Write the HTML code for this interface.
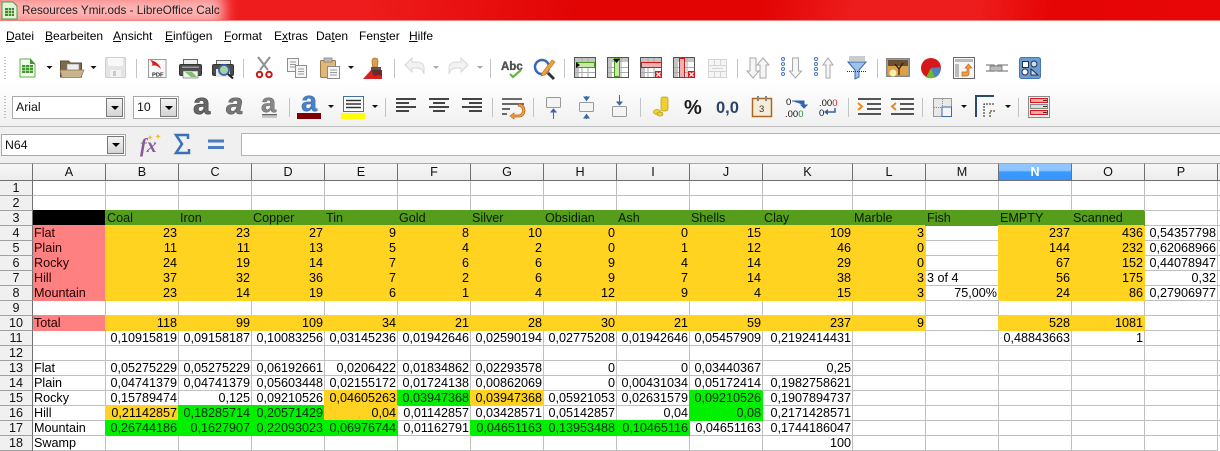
<!DOCTYPE html>
<html><head><meta charset="utf-8"><title>Resources Ymir.ods - LibreOffice Calc</title>
<style>
html,body{margin:0;padding:0;background:#fff}
body{width:1220px;height:449px;overflow:hidden;position:relative;font-family:"Liberation Sans",Arial,sans-serif;color:#000}
#title{position:absolute;left:0;top:0;width:1220px;height:20px;background:linear-gradient(100deg,#ee1c1c 0,#ee1c1c 30%,#e20303 48%,#e20303 62%,#ee1d1d 70%,#ee1d1d 80%,#e60505 86%,#e80606 100%);overflow:hidden}
#glow{position:absolute;left:-8px;top:-6px;width:232px;height:32px;background:rgba(255,195,195,.9);filter:blur(7px)}
#ttext{position:absolute;left:22px;top:4px;font-size:11.7px;line-height:14px;color:#222;white-space:nowrap}
#tline{position:absolute;left:0;top:20px;width:1220px;height:2px;background:linear-gradient(#f08080 50%,#fff 50%)}
#chrome{position:absolute;left:0;top:22px;width:1220px;height:141px;background:linear-gradient(#fff 0,#fff 60px,#f0f0f0 104px,#f0f0f0 141px)}
.m{position:absolute;top:29px;font-size:12px;line-height:15px;color:#000;white-space:nowrap}
.m u{text-underline-offset:1px}
#svg{position:absolute;left:0;top:0;width:1220px;height:163px}
table{position:absolute;left:0;top:163px;border-collapse:separate;border-spacing:0;table-layout:fixed;width:1218px;font-size:12.6px}
td,th{box-sizing:border-box;height:15px;padding:0 1px 0 1px;line-height:14px;border-right:1px solid #c0c0c0;border-bottom:1px solid #c0c0c0;text-align:right;white-space:nowrap;overflow:visible;font-weight:normal;background:#fff;color:#000}
tr.h th{height:18px;border-top:1px solid #a8a8a8;border-right:1px solid #707070;border-bottom:1px solid #707070;text-align:center;background:linear-gradient(#f7f7f7,#ececec);color:#111;line-height:16px;padding:0}
tr.h th.n{background:linear-gradient(#8fc6ff 0,#8fc6ff 40%,#3a99ff 50%,#3496ff 100%);color:#fff;font-weight:bold;border-right-color:#707070}
td.rh{border-right:1px solid #707070;border-bottom:1px solid #a0a0a0;background:#f0f0f0;text-align:center;padding:0;color:#111}
.t{text-align:left}
.y{background:#ffd320;border-color:#ffd320;box-shadow:-1px -1px 0 0 #ffd320}
.g{background:#579d1c;border-color:#579d1c;box-shadow:-1px -1px 0 0 #579d1c;text-align:left;color:#0a1a00}
.l{background:#00f000;border-color:#00f000;box-shadow:-1px -1px 0 0 #00f000;color:#022802}
.r{background:#ff8080;border-color:#ff8080;box-shadow:0 -1px 0 0 #ff8080;text-align:left;color:#200}
.k{background:#000;border-color:#000;box-shadow:0 -1px 0 0 #000}
.box{position:absolute;box-sizing:border-box;background:#fff;border:1px solid #a9a9a9;font-size:12.3px;line-height:20px;padding-left:3px;color:#111}
.btn{position:absolute;box-sizing:border-box;border:1px solid #777;background:linear-gradient(#f4f4f4,#d4d4d4)}
.btn:after{content:"";position:absolute;left:50%;top:50%;margin:-2px 0 0 -4px;border:4px solid transparent;border-top:4px solid #000;border-bottom:0}
#qh{position:absolute;left:1218px;top:163px;width:2px;height:18px;box-sizing:border-box;border-top:1px solid #a8a8a8;border-bottom:1px solid #707070;background:#f0f0f0}
#q{position:absolute;left:1218px;top:181px;width:2px;height:268px;background:repeating-linear-gradient(#fff 0,#fff 14px,#c0c0c0 14px,#c0c0c0 15px)}
</style></head><body>
<div id="title"><div id="glow"></div><div id="ttext">Resources Ymir.ods - LibreOffice Calc</div></div>
<div id="tline"></div>
<div id="chrome"></div>
<div class="m" style="left:6px"><u>D</u>atei</div>
<div class="m" style="left:45px"><u>B</u>earbeiten</div>
<div class="m" style="left:113px"><u>A</u>nsicht</div>
<div class="m" style="left:165px"><u>E</u>infügen</div>
<div class="m" style="left:224px"><u>F</u>ormat</div>
<div class="m" style="left:274px">E<u>x</u>tras</div>
<div class="m" style="left:316px">Da<u>t</u>en</div>
<div class="m" style="left:359px">Fen<u>s</u>ter</div>
<div class="m" style="left:409px"><u>H</u>ilfe</div>

<svg id="svg" viewBox="0 0 1220 163" xmlns="http://www.w3.org/2000/svg" font-family="Liberation Sans, Arial, sans-serif">
<!-- window app icon -->
<path d="M2 2h11l4 4v13H2z" fill="#e4f2dc" stroke="#4d9a3a"/><rect x="5" y="8" width="9" height="8" fill="#3c8a2a"/><path d="M5 10.500h9M5 13.500h9M8.500 8v8M11.500 8v8" stroke="#cfe8c4" stroke-width=".8"/>
<!-- bar lines -->
<rect x="0" y="126" width="1220" height="1" fill="#bdbdbd"/>
<rect x="241.500" y="133.500" width="979" height="22" fill="#fff" stroke="#b4b4b4"/>
<!-- grips -->
<path d="M5 57v22M5 96v23" stroke="#888" stroke-dasharray="1 2" fill="none"/>
<!-- separators -->
<g stroke="#c4c4c4"><path d="M136.500 59v19M243.500 59v19M394.500 59v19M490.500 59v19M564.500 59v19M737.500 59v19M877.500 59v19"/>
<path d="M289.500 98v19M385.500 98v19M492.500 98v19M533.500 98v19M640.500 98v19M848.500 98v19M922.500 98v19M1018.500 98v19"/></g>
<!-- dropdown arrows -->
<g fill="#111"><path d="M46.500 66h6l-3 3zM90.500 66h6l-3 3zM348 66h6l-3 3zM328 105h6l-3 3zM372 105h6l-3 3zM961 105h6l-3 3zM1005 105h6l-3 3z"/></g>
<g fill="#aaa"><path d="M433 66h6l-3 3zM477 66h6l-3 3z"/></g>
<!-- new doc -->
<path d="M20 59h10l5 5v13H20z" fill="#f4faf0" stroke="#62b04c"/><path d="M30 58v6h5z" fill="#3d9a2a"/><rect x="22" y="65" width="11" height="8" fill="#42982a"/><path d="M22 67.500h11M22 70.500h11M25.500 65v8M29.500 65v8" stroke="#c8e6bc" stroke-width=".8"/>
<!-- open -->
<path d="M60.500 61h8l2 2h11v14h-21z" fill="#7d6a4a" stroke="#5d4e36"/><rect x="67" y="64" width="12" height="8" fill="#eee" stroke="#888" stroke-width=".6"/><path d="M60 70h24l-3 7.500H62z" fill="#c8b48c" stroke="#8a7755" stroke-width=".7"/>
<!-- save disabled -->
<rect x="105.500" y="57.500" width="20" height="20" rx="1" fill="#e4e4e4" stroke="#cfcfcf"/><rect x="108" y="58" width="15" height="8" fill="#f8f8f8"/><rect x="110" y="70" width="11" height="7" fill="#f3f3f3"/><rect x="113" y="71" width="3" height="5" fill="#c9c9c9"/>
<!-- pdf -->
<path d="M148.500 59.500h17.500v18h-17.500z" fill="#fafafa" stroke="#9a9a9a"/><path d="M150 60c6 1 10 5 11 9-4-4-7-4-10-3 2-1 2-3-1-6z" fill="#d82020"/><text x="152" y="76.500" font-size="5.800" font-weight="bold" fill="#222">PDF</text>
<!-- print -->
<rect x="183.500" y="59.500" width="14" height="6" fill="#eee" stroke="#666"/><rect x="179.500" y="64.500" width="22" height="11" rx="1.500" fill="#4c4c4c" stroke="#333"/><rect x="183" y="71" width="15" height="7" fill="#f0f0f0" stroke="#666" stroke-width=".6"/><path d="M185 72l6 5h6l-5-5z" fill="#7cc070"/><rect x="182" y="66.500" width="17" height="1.500" fill="#999"/>
<!-- preview -->
<rect x="216.500" y="60.500" width="14" height="5" fill="#eee" stroke="#666"/><rect x="212.500" y="64.500" width="21" height="11" rx="1.500" fill="#4c4c4c" stroke="#333"/><rect x="216" y="69" width="14" height="8" fill="#e8e8e8"/><circle cx="224" cy="70" r="5" fill="#a8cfa8" stroke="#3668a8" stroke-width="1.800"/><path d="M228 74l5 4.500" stroke="#222" stroke-width="2"/>
<!-- cut -->
<path d="M260 70L270 57M268 70L258 57" stroke="#8f8f8f" stroke-width="2" fill="none"/><circle cx="259.500" cy="74.500" r="2.700" fill="#fff" stroke="#c81818" stroke-width="2"/><circle cx="269" cy="74.500" r="2.700" fill="#fff" stroke="#c81818" stroke-width="2"/>
<!-- copy -->
<rect x="287.500" y="58.500" width="11" height="13" fill="#f5f5f5" stroke="#909090"/><path d="M290 62h6M290 64.500h6M290 67h6" stroke="#999"/><rect x="295.500" y="65.500" width="11" height="12" fill="#f5f5f5" stroke="#909090"/><path d="M298 69h6M298 71.500h6M298 74h6" stroke="#999"/>
<!-- paste -->
<rect x="320.500" y="60.500" width="15" height="17" rx="1" fill="#e0b878" stroke="#9a7a4a"/><rect x="324" y="58" width="8" height="4" fill="#bbb" stroke="#777" stroke-width=".7"/><rect x="327.500" y="66.500" width="12" height="12" fill="#f7f7f7" stroke="#8a8a8a"/><path d="M330 70h7M330 72.500h7M330 75h7" stroke="#999"/>
<!-- brush -->
<path d="M375 58c2 0 3 1 3 3l-.5 6h-5l-.5-6c0-2 1-3 3-3z" fill="#d8a050" stroke="#a87428" stroke-width=".7"/><rect x="371" y="67" width="10" height="3" fill="#555"/><path d="M371 70h11v6h-11z" fill="#6a2a2a"/><path d="M363 79l8-9 3 6 5-1 3 1v3z" fill="#d82020"/>
<!-- undo/redo disabled -->
<path d="M405 65l7-7v4h5c5 0 7 3 7 6v6c-1-4-3-6-7-6h-5v4z" fill="#f2f2f2" stroke="#d8d8d8"/>
<path d="M468 65l-7-7v4h-5c-5 0-7 3-7 6v6c1-4 3-6 7-6h5v4z" fill="#f2f2f2" stroke="#d8d8d8"/>
<!-- abc -->
<text x="501" y="70" font-size="11.500" font-weight="bold" fill="#555" stroke="#333" stroke-width=".3">Abc</text><path d="M510 74l3 3 8-7" stroke="#66b83c" stroke-width="2.200" fill="none"/>
<!-- find -->
<circle cx="542" cy="67" r="7" fill="#fff" stroke="#3a68b8" stroke-width="2.500"/><path d="M548 73l6 6" stroke="#333" stroke-width="3"/><path d="M542 73l10-13 3 2-10 13-4 1z" fill="#f0a040" stroke="#b06818" stroke-width=".6"/>
<!-- table icons -->
<g fill="#fff" stroke="#555"><rect x="574.500" y="57.500" width="21" height="20"/><rect x="607.500" y="57.500" width="21" height="20"/><rect x="640.500" y="57.500" width="21" height="20"/><rect x="673.500" y="57.500" width="21" height="20"/></g>
<g fill="#c4c4c4"><rect x="575" y="58" width="20" height="4"/><rect x="575" y="58" width="4" height="19"/><rect x="608" y="58" width="20" height="4"/><rect x="608" y="58" width="4" height="19"/><rect x="641" y="58" width="20" height="4"/><rect x="641" y="58" width="4" height="19"/><rect x="674" y="58" width="20" height="4"/><rect x="674" y="58" width="4" height="19"/></g>
<g stroke="#aaa" fill="none"><path d="M575 67.500h20M575 72.500h20M582 58v19M588 58v19M608 67.500h20M608 72.500h20M615 58v19M621 58v19M641 67.500h20M641 72.500h20M648 58v19M654 58v19M674 67.500h20M674 72.500h20M681 58v19M687 58v19"/></g>
<rect x="576.500" y="62.500" width="18" height="5" fill="#c8e8a8" stroke="#4c9a1c"/><path d="M576 62l4 3-4 3z" fill="#111"/>
<rect x="614.500" y="58.500" width="5" height="18" fill="#c8e8a8" stroke="#4c9a1c"/><path d="M613 59h7l-3.500 4z" fill="#111"/>
<rect x="641.500" y="62.500" width="20" height="5" fill="#f0b0b0" stroke="#d01818"/><rect x="655" y="71" width="7" height="7" fill="#d81818"/><path d="M656.500 72.500l4 4m0-4l-4 4" stroke="#fff" stroke-width="1.300"/>
<rect x="679.500" y="58.500" width="5" height="19" fill="#f0b0b0" stroke="#d01818"/><rect x="688" y="71" width="7" height="7" fill="#d81818"/><path d="M689.500 72.500l4 4m0-4l-4 4" stroke="#fff" stroke-width="1.300"/>
<!-- merge disabled -->
<rect x="708.500" y="59.500" width="18" height="18" fill="#f5f5f5" stroke="#d4d4d4"/><path d="M708 65.500h19M708 71.500h19M714.500 59v6M720.500 59v6M714.500 72v6M720.500 72v6M712 68.500h11" stroke="#d4d4d4" fill="none"/>
<!-- sort -->
<g fill="#f6f6f6" stroke="#a8a8a8"><path d="M750 58v13h-3l6 7 6-7h-3V58z"/><path d="M766 78V65h3l-6-7-6 7h3v13z"/><path d="M792.500 58v13h-3l6 7 6-7h-3V58z"/><path d="M826 78V65h-3l5-7 5 7h-3v13z"/></g>
<g fill="#fff" stroke="#4878b8"><circle cx="783" cy="59" r="1.500"/><circle cx="783" cy="64" r="1.500"/><circle cx="783" cy="69" r="1.500"/><circle cx="783" cy="74" r="1.500"/><circle cx="816" cy="59" r="1.500"/><circle cx="816" cy="64" r="1.500"/><circle cx="816" cy="69" r="1.500"/><circle cx="816" cy="74" r="1.500"/></g>
<!-- filter -->
<path d="M848 62h18l-7 8v7l-4 2v-9z" fill="#9cc4ec" stroke="#3a68a8"/><rect x="849" y="56" width="16" height="5" fill="#ccc"/><path d="M847 71.500h20" stroke="#333" stroke-dasharray="1 1"/>
<!-- image -->
<rect x="886.500" y="58.500" width="23" height="18" fill="#9a9a90" stroke="#888"/><rect x="888" y="60" width="20" height="15" fill="#e0a048"/><rect x="888" y="60" width="20" height="6" fill="#6a5030"/><circle cx="893" cy="73" r="3.500" fill="#fff0b0"/><path d="M899 75v-6l-4-5m4 5l4-6" stroke="#2a1a10" stroke-width="1.200" fill="none"/>
<!-- chart -->
<circle cx="931" cy="68" r="10" fill="#d81818"/><path d="M931 68l10-1c0 5-2 9-6 10.500z" fill="#5080c0"/><path d="M931 68l4 9.500c-3 1-6 1-9 0z" fill="#6cb830"/>
<!-- navigator -->
<rect x="953.500" y="57.500" width="21" height="21" fill="#f6f6f6" stroke="#666"/><rect x="955" y="59" width="18" height="3" fill="#bbb"/><rect x="955" y="64" width="4" height="13" fill="#bbb"/><path d="M962 76h4c2 0 3-1 3-3v-5h3l-3.500-4-3.500 4h2v4h-5z" fill="#f0a040" stroke="#c06818" stroke-width=".7"/>
<!-- link -->
<path d="M986 65h8l2 2 2-2h10M986 71h8l2-2 2 2h10" stroke="#888" stroke-width="1.200" fill="none"/><rect x="990" y="66" width="12" height="5" fill="#bbb" stroke="#666" stroke-width=".7"/>
<!-- shapes -->
<rect x="1019.500" y="57.500" width="21" height="21" rx="2" fill="#6c9ad4" stroke="#4a76b0"/><rect x="1022.500" y="61.500" width="6" height="6" fill="#fff" stroke="#234"/><circle cx="1034" cy="64" r="3" fill="#c8dcf4" stroke="#234"/><circle cx="1025" cy="72" r="3" fill="#fff" stroke="#234"/><path d="M1031 69v6h7z" fill="#c8dcf4" stroke="#234"/>

<!-- format row -->
<text x="193" y="114" font-size="31" font-weight="bold" fill="#666" stroke="#444" stroke-width=".6">a</text>
<text x="226" y="114" font-size="31" font-weight="bold" font-style="italic" fill="#777" stroke="#555" stroke-width=".5">a</text>
<text x="261" y="112" font-size="27" font-weight="bold" fill="#888" stroke="#555" stroke-width=".4">a</text><rect x="262" y="114" width="15" height="1.500" fill="#666"/><rect x="262" y="116.500" width="15" height="1" fill="#999"/>
<text x="301" y="111" font-size="29" font-weight="bold" fill="#4a80c4" stroke="#2f62a8" stroke-width=".4">a</text><rect x="297" y="113" width="24" height="6" fill="#800000"/>
<rect x="343.500" y="96.500" width="20" height="15" fill="#fff" stroke="#4070a8"/><path d="M346 100.500h15M346 104h15M346 107.500h15" stroke="#333" stroke-width="1.500"/><rect x="341" y="113" width="24" height="6" fill="#ffff00"/>
<!-- align -->
<g stroke="#444" stroke-width="2"><path d="M396 99h20M396 103h13M396 107h20M396 111h13"/><path d="M429 99h20M433 103h12M429 107h20M433 111h12"/><path d="M462 99h20M469 103h13M462 107h20M469 111h13"/></g>
<!-- wrap -->
<path d="M502 99h20M502 104h22M502 109h8M502 114h5" stroke="#555" stroke-width="1.800" fill="none"/><path d="M518 106c6 0 6 9 0 9h-4v-2l-4 3 4 3v-2h5c8 0 8-13 0-13z" fill="#f0a040" stroke="#c06818" stroke-width=".7"/>
<!-- valign -->
<rect x="546.500" y="97.500" width="14" height="10" rx="1" fill="#f4f4f4" stroke="#999"/><path d="M553.500 119v-8M551 112l2.500-3 2.500 3z" stroke="#3a68a8" fill="#3a68a8"/>
<rect x="579.500" y="102.500" width="14" height="9" rx="1" fill="#f4f4f4" stroke="#999"/><path d="M586.500 96v2M586.500 117v2M584 97h5l-2.500 3.500zM584 118h5l-2.500-3.500z" stroke="#3a68a8" fill="#3a68a8"/>
<rect x="612.500" y="106.500" width="14" height="10" rx="1" fill="#f4f4f4" stroke="#999"/><path d="M619.500 95v8M617 102l2.500 3 2.500-3z" stroke="#3a68a8" fill="#3a68a8"/>
<!-- coins -->
<rect x="661" y="97" width="7" height="14" rx="2" fill="#f0d030" stroke="#b89810" stroke-width=".7"/><ellipse cx="657" cy="112" rx="3.500" ry="2.500" fill="#f0d030" stroke="#b89810" stroke-width=".7"/><ellipse cx="660" cy="114" rx="3" ry="2" fill="#f0d030" stroke="#b89810" stroke-width=".7"/>
<text x="684" y="114" font-size="20" font-weight="bold" fill="#1a1a1a" font-family="Liberation Sans">%</text>
<text x="716" y="113" font-size="16.500" font-weight="bold" fill="#2a4466">0,0</text>
<!-- date -->
<rect x="752.500" y="98.500" width="19" height="18" fill="#f4ecd8" stroke="#a86820" stroke-width="1.500"/><rect x="757" y="96" width="2" height="5" fill="#888"/><rect x="765" y="96" width="2" height="5" fill="#888"/><text x="759" y="112" font-size="9.500" fill="#333">3</text>
<!-- number formats -->
<text x="786" y="105" font-size="9.500" fill="#111">0</text><path d="M792 101h12v4M801 105h6l-3 3z" stroke="#2f62a8" fill="#2f62a8" stroke-width="1"/><text x="785" y="117" font-size="9.500" fill="#111">.00<tspan fill="#2a8a2a">0</tspan></text>
<text x="819" y="106" font-size="9.500" fill="#111">.00<tspan fill="#d02020">0</tspan></text><text x="819" y="116" font-size="9.500" fill="#111">0</text><path d="M835 108v4h-8" stroke="#2f62a8" stroke-width="1.500" fill="none"/><path d="M828 109l-4 3 4 3z" fill="#2f62a8"/>
<!-- indent -->
<path d="M858 99h23M867 104h14M867 109h14M858 114h23M891 99h23M900 104h14M900 109h14M891 114h23" stroke="#555" stroke-width="2"/><path d="M858 103l4 3.500-4 3.500" stroke="#e88a20" stroke-width="2" fill="none"/><path d="M896 103l-4 3.500 4 3.500" stroke="#e88a20" stroke-width="2" fill="none"/>
<!-- borders -->
<rect x="933.500" y="98.500" width="18" height="18" fill="#e8e8e8" stroke="#999"/><rect x="942" y="107" width="9.500" height="9.500" fill="#f4f4f4" stroke="#3a68a8"/><path d="M934 107.500h8M942.500 99v8" stroke="#888" stroke-dasharray="1 1"/>
<path d="M976 117V96h18" fill="none" stroke="#2a4a70" stroke-width="2"/><path d="M984 117v-13h11M990 117v-6h5" fill="none" stroke="#222" stroke-dasharray="2 1"/>
<!-- conditional -->
<rect x="1028.500" y="96.500" width="21" height="21" fill="#f2f2f2" stroke="#888"/><g stroke="#d81818"><rect x="1030.500" y="98.500" width="17" height="4" fill="#f8a8a8"/><rect x="1030.500" y="110.500" width="17" height="4" fill="#f8a8a8"/></g><rect x="1030.500" y="104.500" width="17" height="4" fill="#ddd" stroke="#888"/><path d="M1043 100.500h4M1043 106.500h4M1043 112.500h4" stroke="#333"/>
<!-- fx -->
<text x="140" y="152" font-size="20" font-weight="bold" font-style="italic" font-family="Liberation Serif" fill="#8a5a98">fx</text><path d="M150 135l1 2 2 .5-2 .5-1 2-1-2-2-.5 2-.5zM158 134l1 2 2 .5-2 .5-1 2-1-2-2-.5 2-.5z" fill="#e8c020"/>
<!-- sigma -->
<path d="M188 139v-4h-12l6 9-6 9h13v-4" fill="none" stroke="#3a70b8" stroke-width="2.500"/>
<!-- equals -->
<rect x="208" y="139.500" width="16" height="3" fill="#4a7cc0"/><rect x="208" y="146" width="16" height="3" fill="#4a7cc0"/>
</svg>

<div class="box" style="left:12px;top:96px;width:113px;height:23px">Arial</div><div class="btn" style="left:106px;top:98px;width:17px;height:19px"></div>
<div class="box" style="left:133px;top:96px;width:46px;height:23px">10</div><div class="btn" style="left:160px;top:98px;width:17px;height:19px"></div>
<div class="box" style="left:1px;top:134px;width:125px;height:22px">N64</div><div class="btn" style="left:107px;top:136px;width:17px;height:18px"></div>

<table>
<colgroup><col style="width:33px"><col style="width:73px"><col style="width:73px"><col style="width:73px"><col style="width:73px"><col style="width:73px"><col style="width:73px"><col style="width:73px"><col style="width:73px"><col style="width:73px"><col style="width:73px"><col style="width:90px"><col style="width:73px"><col style="width:73px"><col style="width:73px"><col style="width:73px"><col style="width:73px"></colgroup>
<tr class="h"><th></th><th>A</th><th>B</th><th>C</th><th>D</th><th>E</th><th>F</th><th>G</th><th>H</th><th>I</th><th>J</th><th>K</th><th>L</th><th>M</th><th class="n">N</th><th>O</th><th>P</th></tr>
<tr><td class="rh">1</td><td></td><td></td><td></td><td></td><td></td><td></td><td></td><td></td><td></td><td></td><td></td><td></td><td></td><td></td><td></td><td></td></tr>
<tr><td class="rh">2</td><td></td><td></td><td></td><td></td><td></td><td></td><td></td><td></td><td></td><td></td><td></td><td></td><td></td><td></td><td></td><td></td></tr>
<tr><td class="rh">3</td><td class="k"></td><td class="g">Coal</td><td class="g">Iron</td><td class="g">Copper</td><td class="g">Tin</td><td class="g">Gold</td><td class="g">Silver</td><td class="g">Obsidian</td><td class="g">Ash</td><td class="g">Shells</td><td class="g">Clay</td><td class="g">Marble</td><td class="g">Fish</td><td class="g">EMPTY</td><td class="g">Scanned</td><td></td></tr>
<tr><td class="rh">4</td><td class="r">Flat</td><td class="y">23</td><td class="y">23</td><td class="y">27</td><td class="y">9</td><td class="y">8</td><td class="y">10</td><td class="y">0</td><td class="y">0</td><td class="y">15</td><td class="y">109</td><td class="y">3</td><td></td><td class="y">237</td><td class="y">436</td><td>0,54357798</td></tr>
<tr><td class="rh">5</td><td class="r">Plain</td><td class="y">11</td><td class="y">11</td><td class="y">13</td><td class="y">5</td><td class="y">4</td><td class="y">2</td><td class="y">0</td><td class="y">1</td><td class="y">12</td><td class="y">46</td><td class="y">0</td><td></td><td class="y">144</td><td class="y">232</td><td>0,62068966</td></tr>
<tr><td class="rh">6</td><td class="r">Rocky</td><td class="y">24</td><td class="y">19</td><td class="y">14</td><td class="y">7</td><td class="y">6</td><td class="y">6</td><td class="y">9</td><td class="y">4</td><td class="y">14</td><td class="y">29</td><td class="y">0</td><td></td><td class="y">67</td><td class="y">152</td><td>0,44078947</td></tr>
<tr><td class="rh">7</td><td class="r">Hill</td><td class="y">37</td><td class="y">32</td><td class="y">36</td><td class="y">7</td><td class="y">2</td><td class="y">6</td><td class="y">9</td><td class="y">7</td><td class="y">14</td><td class="y">38</td><td class="y">3</td><td class="t">3 of 4</td><td class="y">56</td><td class="y">175</td><td>0,32</td></tr>
<tr><td class="rh">8</td><td class="r">Mountain</td><td class="y">23</td><td class="y">14</td><td class="y">19</td><td class="y">6</td><td class="y">1</td><td class="y">4</td><td class="y">12</td><td class="y">9</td><td class="y">4</td><td class="y">15</td><td class="y">3</td><td>75,00%</td><td class="y">24</td><td class="y">86</td><td>0,27906977</td></tr>
<tr><td class="rh">9</td><td></td><td></td><td></td><td></td><td></td><td></td><td></td><td></td><td></td><td></td><td></td><td></td><td></td><td></td><td></td><td></td></tr>
<tr><td class="rh">10</td><td class="r">Total</td><td class="y">118</td><td class="y">99</td><td class="y">109</td><td class="y">34</td><td class="y">21</td><td class="y">28</td><td class="y">30</td><td class="y">21</td><td class="y">59</td><td class="y">237</td><td class="y">9</td><td></td><td class="y">528</td><td class="y">1081</td><td></td></tr>
<tr><td class="rh">11</td><td></td><td>0,10915819</td><td>0,09158187</td><td>0,10083256</td><td>0,03145236</td><td>0,01942646</td><td>0,02590194</td><td>0,02775208</td><td>0,01942646</td><td>0,05457909</td><td>0,2192414431</td><td></td><td></td><td>0,48843663</td><td>1</td><td></td></tr>
<tr><td class="rh">12</td><td></td><td></td><td></td><td></td><td></td><td></td><td></td><td></td><td></td><td></td><td></td><td></td><td></td><td></td><td></td><td></td></tr>
<tr><td class="rh">13</td><td class="t">Flat</td><td>0,05275229</td><td>0,05275229</td><td>0,06192661</td><td>0,0206422</td><td>0,01834862</td><td>0,02293578</td><td>0</td><td>0</td><td>0,03440367</td><td>0,25</td><td></td><td></td><td></td><td></td><td></td></tr>
<tr><td class="rh">14</td><td class="t">Plain</td><td>0,04741379</td><td>0,04741379</td><td>0,05603448</td><td>0,02155172</td><td>0,01724138</td><td>0,00862069</td><td>0</td><td>0,00431034</td><td>0,05172414</td><td>0,1982758621</td><td></td><td></td><td></td><td></td><td></td></tr>
<tr><td class="rh">15</td><td class="t">Rocky</td><td>0,15789474</td><td>0,125</td><td>0,09210526</td><td class="y">0,04605263</td><td class="l">0,03947368</td><td class="y">0,03947368</td><td>0,05921053</td><td>0,02631579</td><td class="l">0,09210526</td><td>0,1907894737</td><td></td><td></td><td></td><td></td><td></td></tr>
<tr><td class="rh">16</td><td class="t">Hill</td><td class="y">0,21142857</td><td class="l">0,18285714</td><td class="l">0,20571429</td><td class="y">0,04</td><td>0,01142857</td><td>0,03428571</td><td>0,05142857</td><td>0,04</td><td class="l">0,08</td><td>0,2171428571</td><td></td><td></td><td></td><td></td><td></td></tr>
<tr><td class="rh">17</td><td class="t">Mountain</td><td class="l">0,26744186</td><td class="l">0,1627907</td><td class="l">0,22093023</td><td class="l">0,06976744</td><td>0,01162791</td><td class="l">0,04651163</td><td class="l">0,13953488</td><td class="l">0,10465116</td><td>0,04651163</td><td>0,1744186047</td><td></td><td></td><td></td><td></td><td></td></tr>
<tr><td class="rh">18</td><td class="t">Swamp</td><td></td><td></td><td></td><td></td><td></td><td></td><td></td><td></td><td></td><td>100</td><td></td><td></td><td></td><td></td><td></td></tr>
</table>
<div id="qh"></div><div id="q"></div>
</body></html>
